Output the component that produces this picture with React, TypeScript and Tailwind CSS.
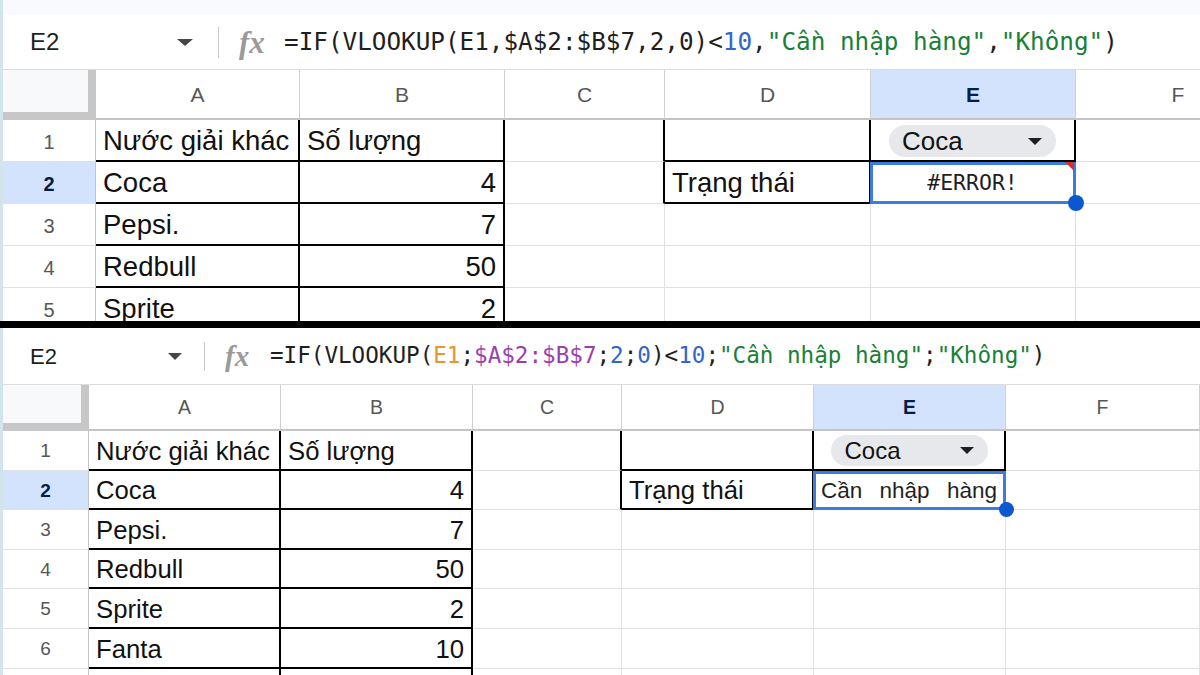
import type { ReactNode } from 'react';

const SANS = "font-[family-name:'Liberation_Sans',Arial,sans-serif]";
const MONO = "font-[family-name:'DejaVu_Sans_Mono',monospace]";

const DATA: [string, string][] = [
  ['Nước giải khác', 'Số lượng'],
  ['Coca', '4'],
  ['Pepsi.', '7'],
  ['Redbull', '50'],
  ['Sprite', '2'],
  ['Fanta', '10'],
  ['', ''],
];

const LETTERS = ['A', 'B', 'C', 'D', 'E', 'F'];

type Cfg = {
  panel: string;
  strip: boolean;
  fbH: string;
  nameW: string;
  nameText: string;
  tri: string;
  sep: string;
  fx: string;
  formula: string;
  headH: string;
  headText: string;
  rowH: string;
  rows: number;
  cellText: string;
  numText: string;
  w: string[];
  chip: string;
  chipTri: string;
  handle: string;
  selBorder: string;
};

const TOP: Cfg = {
  panel: 'h-[321px]',
  strip: true,
  fbH: 'h-[55px]',
  nameW: 'w-[190px]',
  nameText: 'text-[24px]',
  tri: 'border-x-[8px] border-t-[7px]',
  sep: 'ml-[25px] h-[31px]',
  fx: 'ml-[20px] w-[32px] text-[31px]',
  formula: 'ml-[13px] text-[24.3px]',
  headH: 'h-[50px]',
  headText: 'text-[21px] pt-[2px]',
  rowH: 'h-[42px]',
  rows: 5,
  cellText: 'text-[27.5px] pt-[2px]',
  numText: 'text-[20px] pt-[2px]',
  w: ['w-[93px]', 'w-[204px]', 'w-[205px]', 'w-[160px]', 'w-[206px]', 'w-[205px]', 'w-[205px]'],
  chip: 'w-[167px] h-[32px] pl-[13px] pr-[14px] text-[26px]',
  chipTri: 'border-x-[7.5px] border-t-[7px]',
  handle: 'w-[16px] h-[16px] -right-[10px] -bottom-[9px]',
  selBorder: 'border-[3px]',
};

const BOTTOM: Cfg = {
  panel: 'h-[347px]',
  strip: false,
  fbH: 'h-[57px]',
  nameW: 'w-[179px]',
  nameText: 'text-[22px]',
  tri: 'border-x-[7.5px] border-t-[7px]',
  sep: 'ml-[22px] h-[29px]',
  fx: 'ml-[20px] w-[30px] text-[29px]',
  formula: 'ml-[15px] text-[22.6px]',
  headH: 'h-[46px]',
  headText: 'text-[19.5px] pt-[2px]',
  rowH: 'h-[39.6px]',
  rows: 7,
  cellText: 'text-[25.7px] pt-[2px]',
  numText: 'text-[19px] pt-[2px]',
  w: ['w-[86px]', 'w-[192px]', 'w-[192px]', 'w-[149px]', 'w-[192px]', 'w-[192px]', 'w-[194px]'],
  chip: 'w-[157px] h-[31px] pl-[14px] pr-[14px] text-[24px]',
  chipTri: 'border-x-[7px] border-t-[7px]',
  handle: 'w-[15px] h-[15px] -right-[9.5px] -bottom-[9px]',
  selBorder: 'border-[3px]',
};

function cellBorder(r: number, c: number) {
  const inTable = c === 1 || c === 2 || ((c === 4 || c === 5) && r <= 2);
  if (inTable) return 'border-r-2 border-b-2 border-black';
  if (c === 3 && r <= 2) return 'border-r-2 border-b border-r-black border-b-[#e1e1e1]';
  return 'border-r border-b border-[#e1e1e1]';
}

function Tri({ size, color }: { size: string; color: string }) {
  return <span className={`w-0 h-0 shrink-0 border-x-transparent ${size} ${color}`} />;
}

function FormulaBar({ cfg, children }: { cfg: Cfg; children: ReactNode }) {
  return (
    <div className={`flex items-center shrink-0 border-b border-[#dadce0] bg-white ${cfg.fbH}`}>
      <div className={`flex items-center justify-between shrink-0 pl-[27px] ${cfg.nameW}`}>
        <span className={`${SANS} ${cfg.nameText} text-[#1f1f1f]`}>E2</span>
        <Tri size={cfg.tri} color="border-t-[#444746]" />
      </div>
      <div className={`w-px shrink-0 bg-[#c4c7c5] ${cfg.sep}`} />
      <span
        className={`shrink-0 italic font-bold leading-none font-[family-name:'Liberation_Serif',serif] text-[#9a9a9a] ${cfg.fx}`}
      >
        fx
      </span>
      <div className={`${MONO} whitespace-pre text-[#1f1f1f] ${cfg.formula}`}>{children}</div>
    </div>
  );
}

function HeaderRow({ cfg }: { cfg: Cfg }) {
  return (
    <div className={`flex shrink-0 ${cfg.headH}`}>
      <div className={`shrink-0 bg-[#f8f9fa] border-r-[8px] border-b-[8px] border-[#c7c7c7] ${cfg.w[0]}`} />
      {LETTERS.map((l, i) => (
        <div
          key={l}
          className={`shrink-0 flex items-center justify-center border-r border-b-2 border-r-[#d0d0d0] border-b-[#c4c4c4] ${SANS} ${cfg.headText} ${cfg.w[i + 1]} ${
            l === 'E' ? 'bg-[#d3e3fd] font-bold text-[#041e49]' : 'bg-white text-[#575757]'
          }`}
        >
          {l}
        </div>
      ))}
    </div>
  );
}

function Sheet({
  cfg,
  formula,
  e2,
  error,
}: {
  cfg: Cfg;
  formula: ReactNode;
  e2: ReactNode;
  error?: boolean;
}) {
  const rows = Array.from({ length: cfg.rows }, (_, i) => i + 1);
  return (
    <div className={`flex flex-col shrink-0 overflow-hidden border-l-[3px] border-[#d2e4ec] bg-white ${cfg.panel}`}>
      {cfg.strip ? <div className="h-[15px] shrink-0 bg-[#f8fafd]" /> : null}
      <FormulaBar cfg={cfg}>{formula}</FormulaBar>
      <HeaderRow cfg={cfg} />
      {rows.map((r) => {
        const [a, b] = DATA[r - 1] ?? ['', ''];
        return (
          <div key={r} className={`flex shrink-0 ${cfg.rowH}`}>
            <div
              className={`shrink-0 flex items-center justify-center border-r border-b border-r-[#c4c4c4] border-b-[#e1e1e1] ${SANS} ${cfg.numText} ${cfg.w[0]} ${
                r === 2 ? 'bg-[#d3e3fd] font-bold text-[#041e49]' : 'bg-white text-[#575757]'
              }`}
            >
              {r}
            </div>
            {LETTERS.map((l, i) => {
              const c = i + 1;
              let content: ReactNode = null;
              let align = 'justify-start';
              if (c === 1) content = a;
              if (c === 2) {
                content = b;
                if (r > 1) align = 'justify-end';
              }
              if (c === 4 && r === 2) content = 'Trạng thái';
              if (c === 5 && r === 1) {
                align = 'justify-center';
                content = (
                  <span className={`flex items-center justify-between rounded-full bg-[#e6e8eb] ${cfg.chip}`}>
                    <span>Coca</span>
                    <Tri size={cfg.chipTri} color="border-t-[#1f1f1f]" />
                  </span>
                );
              }
              const isE2 = c === 5 && r === 2;
              return (
                <div
                  key={l}
                  className={`relative shrink-0 flex items-center px-[7px] whitespace-nowrap text-[#111] ${SANS} ${cfg.cellText} ${cfg.w[c]} ${cellBorder(r, c)} ${align}`}
                >
                  {isE2 ? e2 : content}
                  {isE2 ? (
                    <>
                      <span
                        className={`absolute -left-px top-0 -right-[2px] -bottom-[2px] border-[#3b7ddd] ${cfg.selBorder}`}
                      />
                      {error ? (
                        <span className="absolute top-0 right-0 w-0 h-0 border-l-[9px] border-t-[9px] border-l-transparent border-t-[#d93025]" />
                      ) : null}
                      <span className={`absolute z-10 rounded-full bg-[#0b57d0] ${cfg.handle}`} />
                    </>
                  ) : null}
                </div>
              );
            })}
          </div>
        );
      })}
    </div>
  );
}

const DARK = 'text-[#1f1f1f]';
const NUM = 'text-[#2f66cc]';
const STR = 'text-[#188038]';

export default function App() {
  return (
    <div className="w-[1200px] h-[675px] overflow-hidden bg-white flex flex-col">
      <Sheet
        cfg={TOP}
        error
        formula={
          <>
            <span className={DARK}>=IF(VLOOKUP(E1,$A$2:$B$7,2,0)&lt;</span>
            <span className={NUM}>10</span>
            <span className={DARK}>,</span>
            <span className={STR}>"Cần nhập hàng"</span>
            <span className={DARK}>,</span>
            <span className={STR}>"Không"</span>
            <span className={DARK}>)</span>
          </>
        }
        e2={
          <span className={`w-full text-center ${MONO} text-[21.5px] text-[#1f1f1f]`}>#ERROR!</span>
        }
      />
      <div className="h-[7px] shrink-0 bg-black" />
      <Sheet
        cfg={BOTTOM}
        formula={
          <>
            <span className={DARK}>=IF(VLOOKUP(</span>
            <span className="text-[#e8952f]">E1</span>
            <span className={DARK}>;</span>
            <span className="text-[#9b3fae]">$A$2:$B$7</span>
            <span className={DARK}>;</span>
            <span className={NUM}>2</span>
            <span className={DARK}>;</span>
            <span className={NUM}>0</span>
            <span className={DARK}>)&lt;</span>
            <span className={NUM}>10</span>
            <span className={DARK}>;</span>
            <span className={STR}>"Cần nhập hàng"</span>
            <span className={DARK}>;</span>
            <span className={STR}>"Không"</span>
            <span className={DARK}>)</span>
          </>
        }
        e2={
          <span className="flex w-full justify-between text-[22.5px] text-[#1f1f1f]">
            <span>Cần</span>
            <span>nhập</span>
            <span>hàng</span>
          </span>
        }
      />
    </div>
  );
}
